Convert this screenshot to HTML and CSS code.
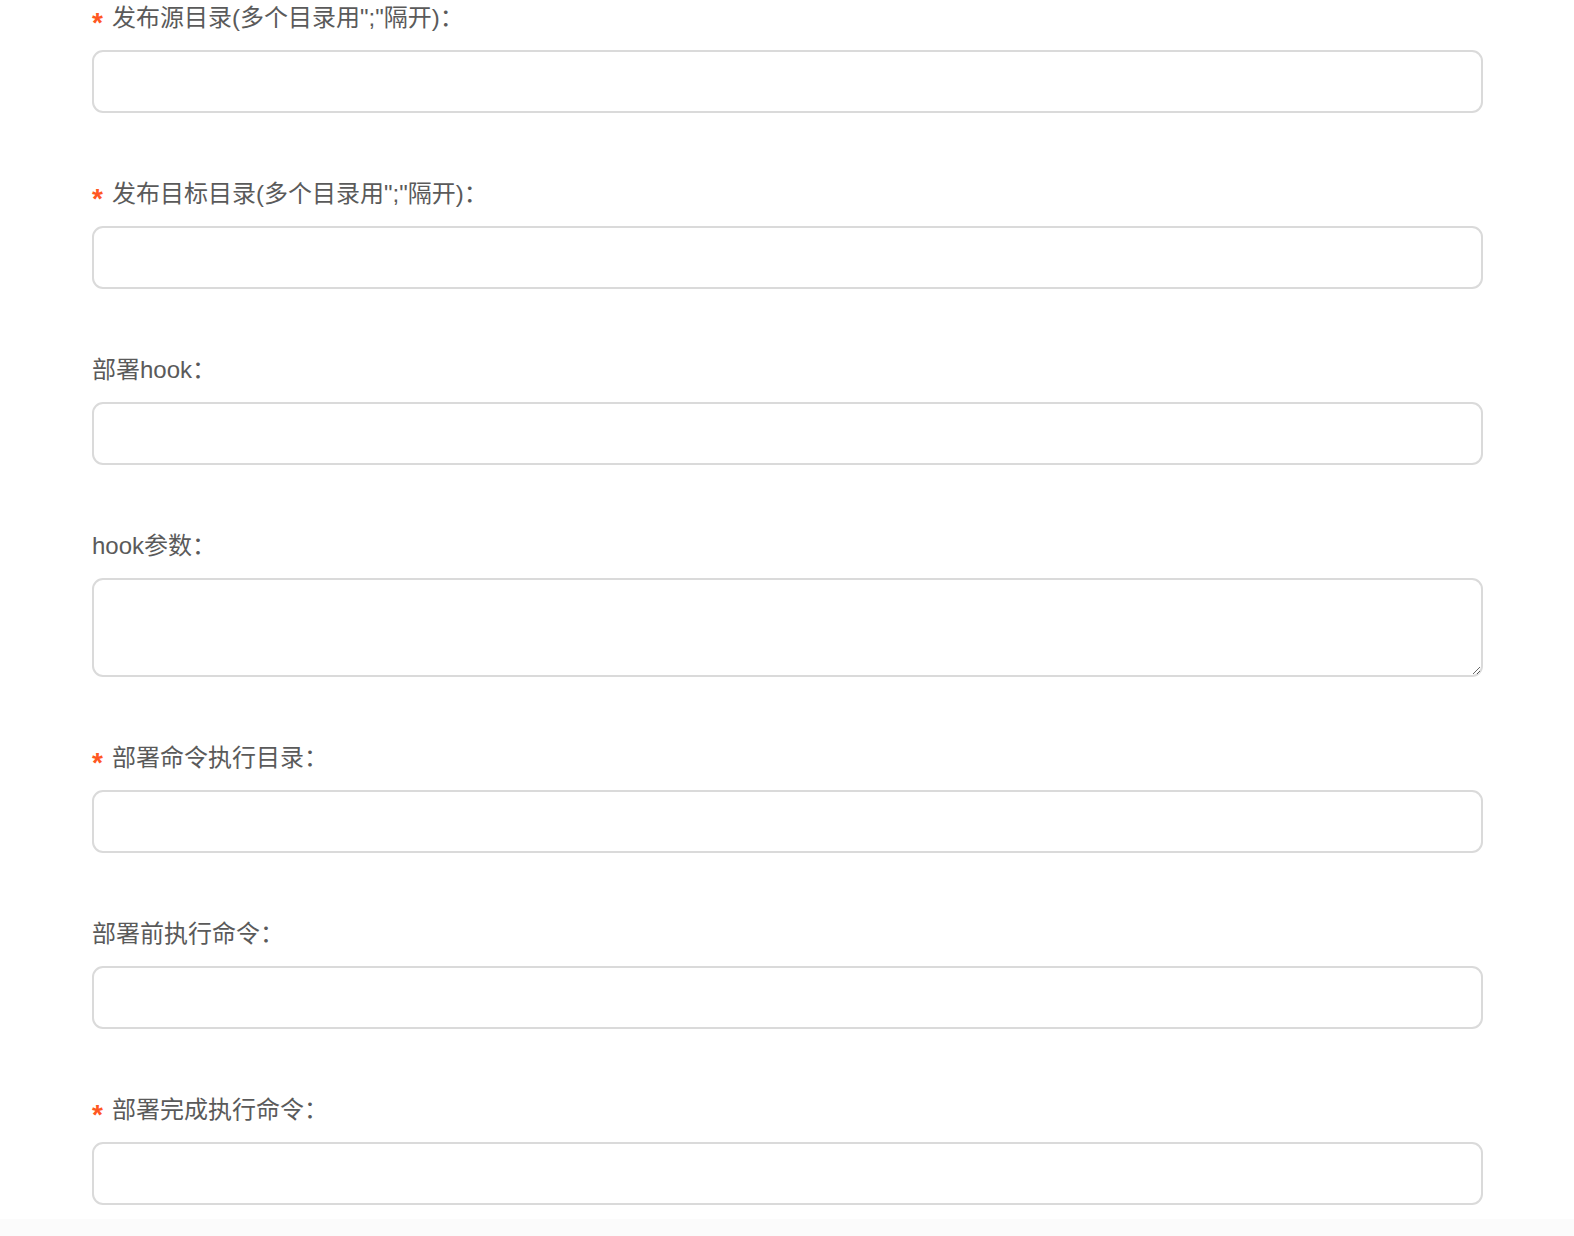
FILE: index.html
```html
<!DOCTYPE html>
<html lang="zh-CN">
<head>
    <meta charset="UTF-8">
    <meta name="viewport" content="width=device-width, initial-scale=1.0">
    <title>发布配置</title>
    <link rel="stylesheet" href="styles.css">
</head>
<body>
    <form class="deploy-form">
        <div class="form-item">
            <label class="form-label"><span class="required">*</span>发布源目录(多个目录用";"隔开)：</label>
            <input type="text" class="form-input">
        </div>
        <div class="form-item">
            <label class="form-label"><span class="required">*</span>发布目标目录(多个目录用";"隔开)：</label>
            <input type="text" class="form-input">
        </div>
        <div class="form-item">
            <label class="form-label">部署hook：</label>
            <input type="text" class="form-input">
        </div>
        <div class="form-item">
            <label class="form-label">hook参数：</label>
            <textarea class="form-input form-textarea"></textarea>
        </div>
        <div class="form-item">
            <label class="form-label"><span class="required">*</span>部署命令执行目录：</label>
            <input type="text" class="form-input">
        </div>
        <div class="form-item">
            <label class="form-label">部署前执行命令：</label>
            <input type="text" class="form-input">
        </div>
        <div class="form-item">
            <label class="form-label"><span class="required">*</span>部署完成执行命令：</label>
            <input type="text" class="form-input">
        </div>
    </form>
    <div class="form-footer"></div>
</body>
</html>
```

FILE: styles.css
```css
html, body {
    margin: 0;
    background-color: #ffffff;
}
body {
    font-family: "Liberation Sans", "Noto Sans CJK SC", sans-serif;
    color: #5a5a5a;
}
.deploy-form {
    padding: 3px 91px 0 92px;
}
.form-item {
    display: flex;
    flex-direction: column;
    margin-bottom: 66px;
}
.form-item:last-child {
    margin-bottom: 14px;
}
.form-label {
    font-size: 24px;
    line-height: 30px;
    height: 30px;
    margin-bottom: 17px;
    white-space: nowrap;
}
.required {
    display: inline-block;
    width: 20px;
    color: #ff5722;
    font-size: 28px;
    font-weight: 700;
    line-height: 30px;
    vertical-align: -6px;
}
.form-input {
    box-sizing: border-box;
    width: 100%;
    height: 63px;
    margin: 0;
    padding: 0 16px;
    border: 2px solid #dadada;
    border-radius: 11px;
    background: #ffffff;
    font-size: 20px;
    font-family: inherit;
    outline: none;
}
.form-textarea {
    display: block;
    height: 99px;
    padding: 12px 16px;
    resize: vertical;
}
.form-footer {
    height: 40px;
    background-color: #fbfbfb;
}
```
